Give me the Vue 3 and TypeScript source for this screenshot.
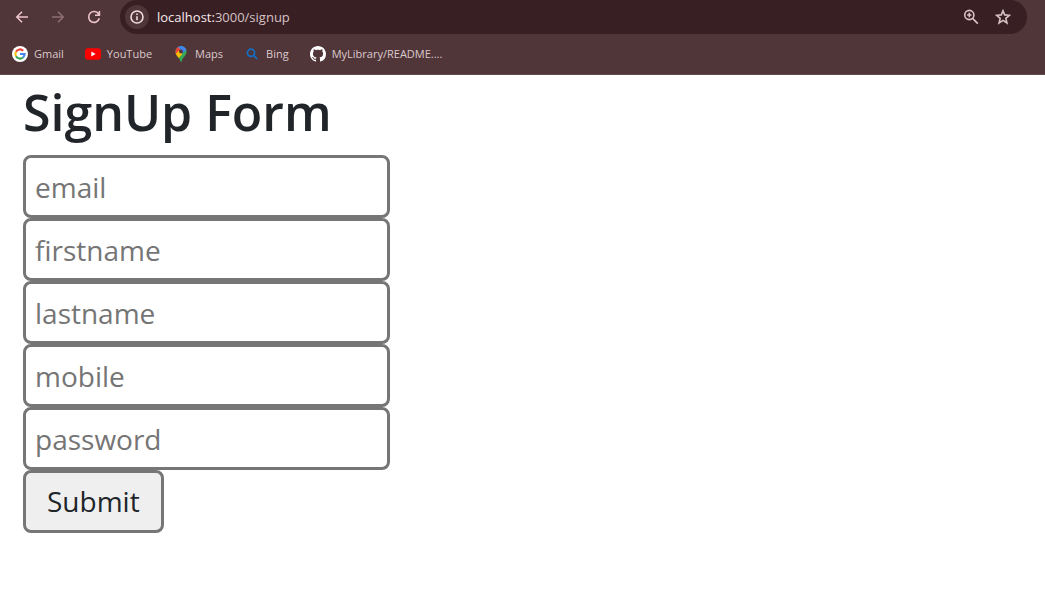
<script setup lang="ts">
import { reactive, ref } from 'vue'

type FieldName = 'email' | 'firstname' | 'lastname' | 'mobile' | 'password'

const fields: { name: FieldName; type: string }[] = [
  { name: 'email', type: 'email' },
  { name: 'firstname', type: 'text' },
  { name: 'lastname', type: 'text' },
  { name: 'mobile', type: 'tel' },
  { name: 'password', type: 'password' },
]

const form = reactive<Record<FieldName, string>>({
  email: '',
  firstname: '',
  lastname: '',
  mobile: '',
  password: '',
})

const submitted = ref(false)

function submit() {
  submitted.value = true
}
</script>

<template>
  <div class="browser">
    <header class="chrome">
      <div class="toolbar">
        <nav class="history" aria-label="History">
          <button type="button" class="icon-button" aria-label="Back">
            <svg width="16" height="16" viewBox="0 0 16 16" class="stroke"><path d="M14 8H3M8 2.8 2.8 8 8 13.2" /></svg>
          </button>
          <button type="button" class="icon-button dim" aria-label="Forward">
            <svg width="16" height="16" viewBox="0 0 16 16" class="stroke"><path d="M2 8h11M8 2.8 13.2 8 8 13.2" /></svg>
          </button>
          <button type="button" class="icon-button" aria-label="Reload">
            <svg width="16" height="16" viewBox="0 0 16 16" class="stroke"><path d="M12.6 5A5.4 5.4 0 1 0 13.3 9.3M13.4 2v4.3H9" /></svg>
          </button>
        </nav>
        <div class="address">
          <button type="button" class="info" aria-label="Site information">
            <svg width="16" height="16" viewBox="0 0 16 16">
              <circle cx="8" cy="8" r="6" fill="none" stroke="currentColor" stroke-width="1.6" />
              <path d="M8 7.2v4M8 4.5v1.6" stroke="currentColor" stroke-width="1.6" />
            </svg>
          </button>
          <span class="url"><span class="host">localhost:</span>3000/signup</span>
          <button type="button" class="icon-button action" aria-label="Zoom">
            <svg width="16" height="16" viewBox="0 0 16 16" class="stroke">
              <circle cx="6.3" cy="6" r="4.6" /><path d="m9.6 9.4 5.2 5.2M6.3 3.8v4.4M4.1 6h4.4" />
            </svg>
          </button>
          <button type="button" class="icon-button action" aria-label="Bookmark this page">
            <svg width="16" height="16" viewBox="0 0 16 16" class="stroke">
              <path d="m8 1.7 1.7 4.2 4.7.4-3.6 3 1.1 4.6L8 11.4l-3.9 2.5 1.1-4.6-3.6-3 4.7-.4Z" />
            </svg>
          </button>
        </div>
      </div>
      <nav class="bookmarks" aria-label="Bookmarks">
        <a href="#gmail">
          <svg width="16" height="16" viewBox="0 0 16 16">
            <circle cx="8" cy="8" r="8" fill="#fff" />
            <g fill="none" stroke-width="2.1">
              <path d="M4 5.7A4.6 4.6 0 0 1 11.2 4.7" stroke="#ea4335" />
              <path d="M4 5.7a4.6 4.6 0 0 0 0 4.6" stroke="#fbbc05" />
              <path d="M4 10.3a4.6 4.6 0 0 0 7 1.2" stroke="#34a853" />
              <path d="M11 11.5A4.6 4.6 0 0 0 12.6 8H8" stroke="#4285f4" />
            </g>
          </svg>
          <span>Gmail</span>
        </a>
        <a href="#youtube">
          <svg width="16" height="16" viewBox="0 0 16 16">
            <rect x="0" y="2.3" width="16" height="11.4" rx="3" fill="#f00" />
            <path d="m6.3 5.6 4.3 2.4-4.3 2.4Z" fill="#fff" />
          </svg>
          <span>YouTube</span>
        </a>
        <a href="#maps">
          <svg width="16" height="16" viewBox="0 0 16 16">
            <defs>
              <clipPath id="pin"><path d="M8 0a5.6 5.6 0 0 0-5.6 5.6c0 2 .9 3.4 2.2 5C6 12.3 7 13.5 7.3 15.2c.2 1 1.2 1 1.4 0C9 13.5 10 12.3 11.4 10.6c1.3-1.6 2.2-3 2.2-5A5.6 5.6 0 0 0 8 0Z" /></clipPath>
            </defs>
            <g clip-path="url(#pin)">
              <path d="M0 0h16v16H0Z" fill="#34a853" />
              <path d="M4 0h10v3L8 9 4 4Z" fill="#4285f4" />
              <path d="M0 0h4.5L8 4.5 3.5 9 0 8Z" fill="#ea4335" />
              <path d="m2 8.6 4-4 3.5 3.5-5 5.5Z" fill="#fbbc04" />
            </g>
            <circle cx="8" cy="5.6" r="2" fill="#503539" />
          </svg>
          <span>Maps</span>
        </a>
        <a href="#bing">
          <svg width="16" height="16" viewBox="0 0 16 16" fill="none" stroke="#1170c4" stroke-width="1.7">
            <circle cx="7" cy="6.8" r="3.6" /><path d="m9.6 9.4 3.6 3.6" />
          </svg>
          <span>Bing</span>
        </a>
        <a href="#mylibrary">
          <svg width="16" height="16" viewBox="0 0 16 16" fill="#fff">
            <path d="M8 0C3.58 0 0 3.58 0 8c0 3.54 2.29 6.53 5.47 7.59.4.07.55-.17.55-.38 0-.19-.01-.82-.01-1.49-2.01.37-2.53-.49-2.69-.94-.09-.23-.48-.94-.82-1.13-.28-.15-.68-.52-.01-.53.63-.01 1.08.58 1.23.82.72 1.21 1.87.87 2.33.66.07-.52.28-.87.51-1.07-1.78-.2-3.64-.89-3.64-3.95 0-.87.31-1.59.82-2.15-.08-.2-.36-1.02.08-2.12 0 0 .67-.21 2.2.82.64-.18 1.32-.27 2-.27s1.36.09 2 .27c1.53-1.04 2.2-.82 2.2-.82.44 1.1.16 1.92.08 2.12.51.56.82 1.27.82 2.15 0 3.07-1.87 3.75-3.65 3.95.29.25.54.73.54 1.48 0 1.07-.01 1.93-.01 2.2 0 .21.15.46.55.38A8.01 8.01 0 0 0 16 8c0-4.42-3.58-8-8-8Z" />
          </svg>
          <span>MyLibrary/README....</span>
        </a>
      </nav>
    </header>

    <main class="page">
      <h1>SignUp Form</h1>
      <form class="signup" @submit.prevent="submit">
        <input
          v-for="field in fields"
          :key="field.name"
          v-model="form[field.name]"
          :type="field.type"
          :name="field.name"
          :placeholder="field.name"
          :aria-label="field.name"
        />
        <button type="submit">Submit</button>
      </form>
    </main>
  </div>
</template>

<style>
body {
  margin: 0;
  background: #fff;
}
</style>

<style scoped>
.browser {
  font-family: "Segoe UI", "Open Sans", "Noto Sans", sans-serif;
  color: #212529;
}

.chrome {
  background: #503539;
  border-bottom: 1px solid #64494d;
}

.toolbar {
  display: flex;
  height: 34px;
  padding-right: 18px;
}

.history {
  display: flex;
  align-items: center;
  gap: 20px;
  padding: 0 18px 0 14px;
}

.icon-button,
.info {
  display: flex;
  padding: 0;
  border: 0;
  background: none;
  color: #edc3ca;
}

.dim {
  color: #8d6f73;
}

.stroke {
  fill: none;
  stroke: currentColor;
  stroke-width: 1.6;
}

.address {
  display: flex;
  flex: 1;
  align-items: center;
  padding: 0 16px 0 5px;
  border-radius: 17px;
  background: #381f23;
}

.info {
  padding: 4px;
  border-radius: 50%;
  background: #503539;
  color: #eedde0;
}

.url {
  flex: 1;
  padding-left: 8px;
  color: #d6c2c5;
  font-size: 13px;
  line-height: 20px;
}

.host {
  color: #f7eaec;
}

.action {
  margin-left: 16px;
  color: #d9c2c5;
}

.bookmarks {
  display: flex;
  align-items: center;
  gap: 21px;
  height: 40px;
  padding-left: 12px;
}

.bookmarks a {
  display: flex;
  align-items: center;
  gap: 6px;
  color: #dccacc;
  font-size: 11px;
  line-height: 16px;
  text-decoration: none;
}

.page {
  padding: 6px 23px;
}

h1 {
  margin: 0 0 11px;
  font-size: 50px;
  font-weight: 600;
  line-height: 63px;
}

.signup {
  display: flex;
  flex-direction: column;
  align-items: flex-start;
}

.signup input,
.signup button {
  box-sizing: border-box;
  height: 63px;
  border: 3px solid #767676;
  border-radius: 8px;
  font-family: inherit;
  font-size: 28px;
  line-height: 45px;
}

.signup input {
  width: 367px;
  max-width: 100%;
  padding: 3px 9px;
  background: #fff;
  color: #212529;
}

.signup input::placeholder {
  color: #757575;
  opacity: 1;
}

.signup button {
  padding: 3px 21px;
  background: #efefef;
  color: #212529;
}
</style>
